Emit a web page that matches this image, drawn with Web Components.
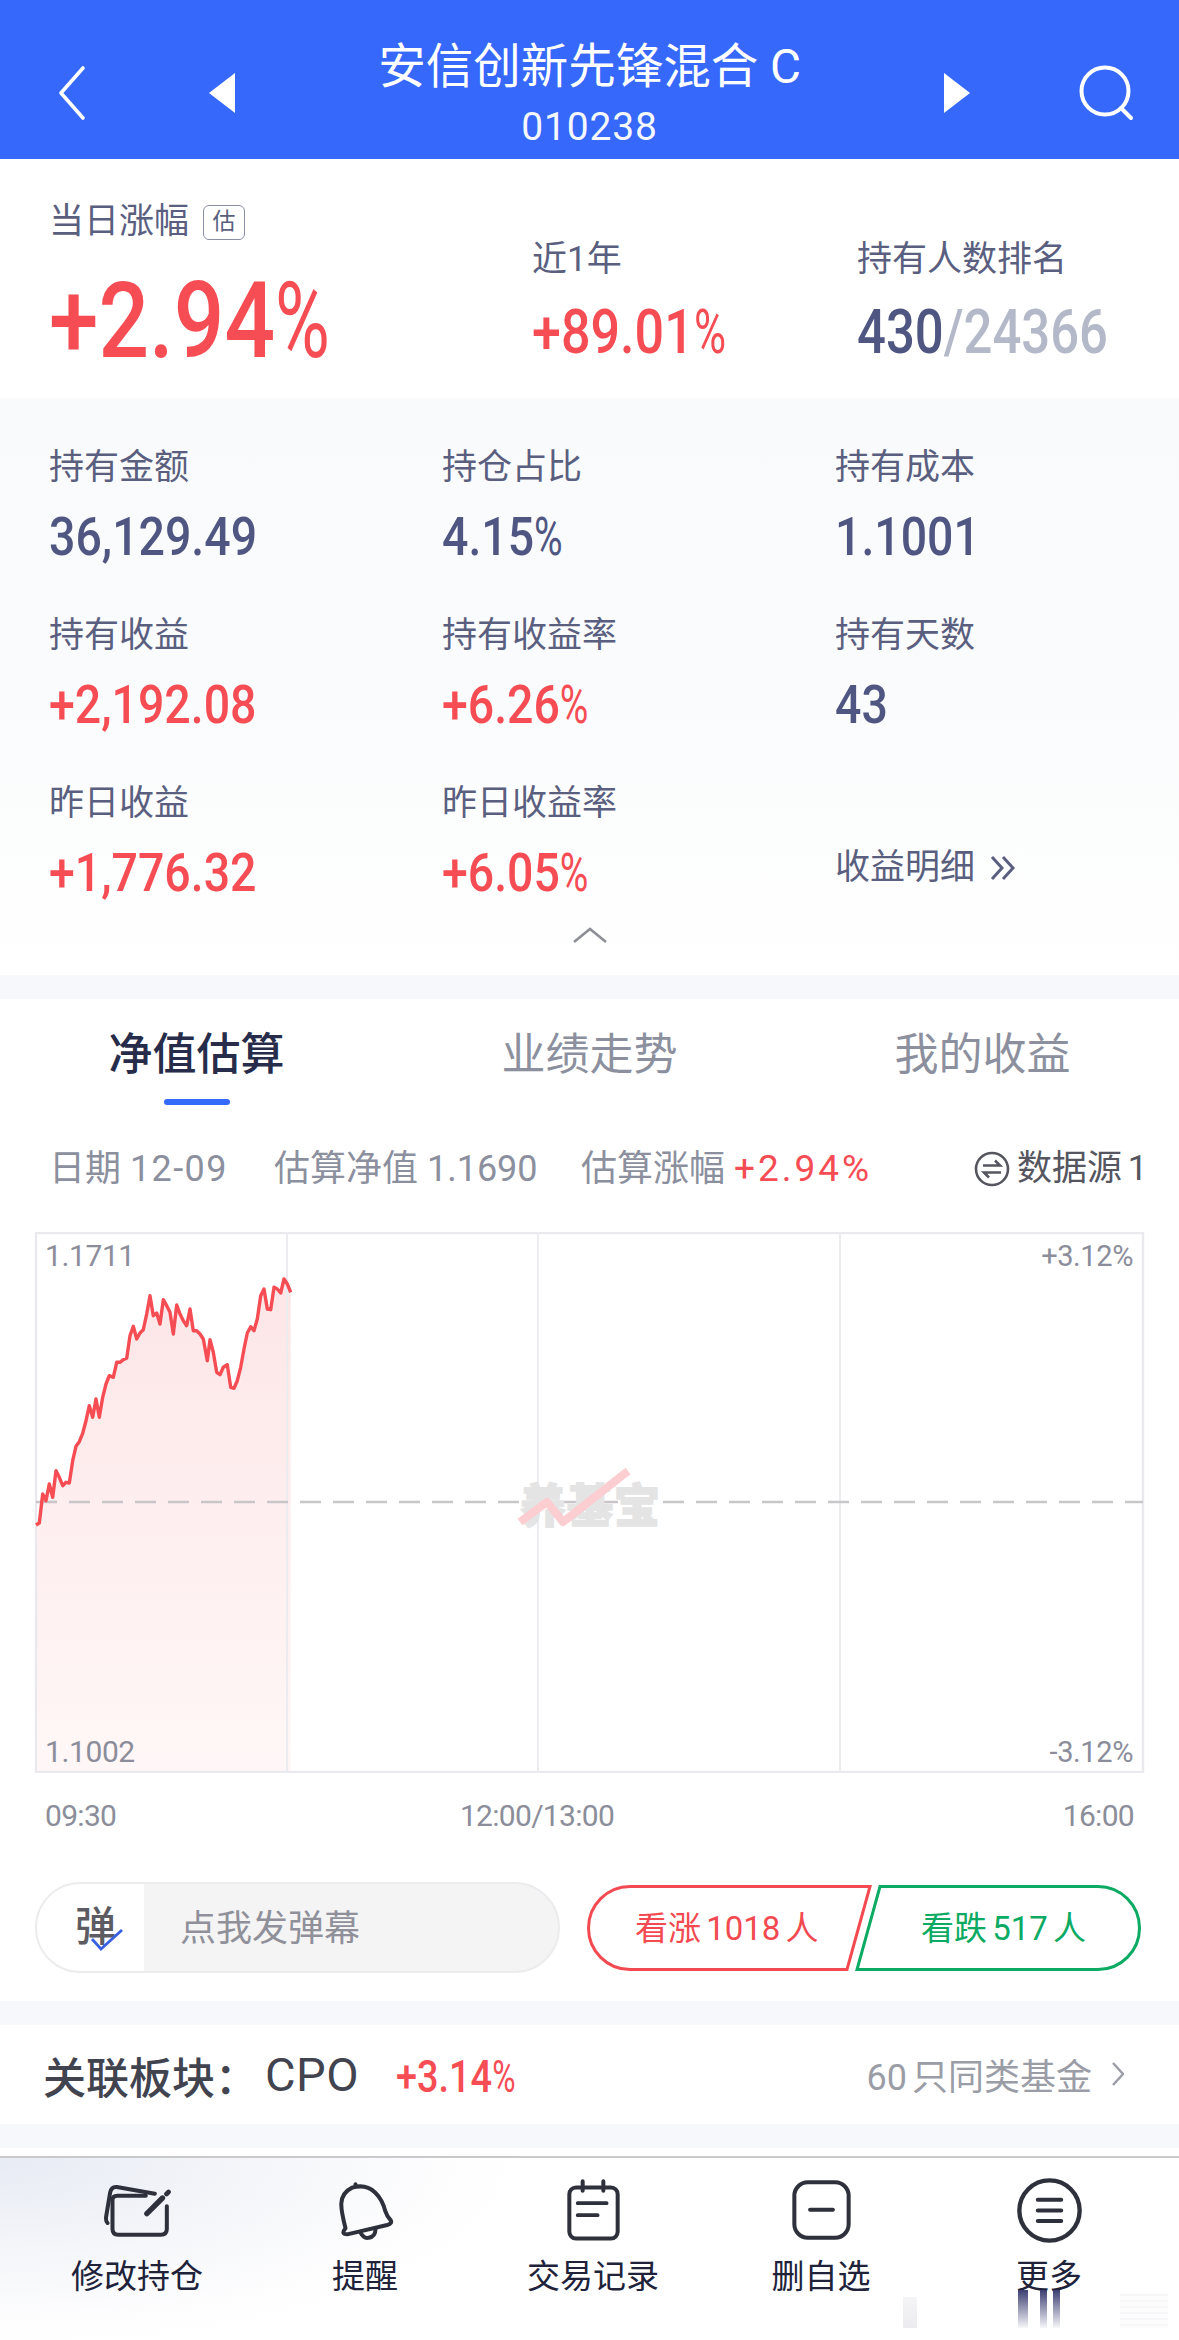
<!DOCTYPE html>
<html lang="zh">
<head>
<meta charset="utf-8">
<title>fund</title>
<style>
html,body{margin:0;padding:0;background:#fff}
body{width:1179px;height:2340px;overflow:hidden;font-family:Roboto,"Noto Sans CJK SC",sans-serif}
</style>
</head>
<body>
<fund-app></fund-app>
<script>
const CN = 'Roboto,"Noto Sans CJK SC",sans-serif'
const PCT = '<span style="font-weight:400;display:inline-block;transform:scaleX(.84);transform-origin:0 50%">%</span>'

class FundHeader extends HTMLElement{
  constructor(){
    super()
    this.attachShadow({mode:"open"}).innerHTML=`<style>
    :host{display:flex;height:159px;background:#3568fb;color:#fff;align-items:stretch;font-family:${CN}}
    .back{width:209px;padding:26px 0 0 57px;box-sizing:border-box;display:flex;align-items:center}
    .mid{flex:1;display:flex;align-items:center;justify-content:space-between;padding-top:26px}
    .t{text-align:center;padding-top:12px;align-self:flex-start}
    .n{font-size:47.5px;line-height:58px;font-weight:400;white-space:nowrap}
    .c{font-size:39px;line-height:44px;letter-spacing:.8px;margin-top:9px;opacity:.95}
    svg{display:block}
    .s{width:209px;padding:26px 0 0 109px;box-sizing:border-box;display:flex;align-items:center}
    </style>
    <div class="back"><svg width="30" height="56" viewBox="0 0 30 56"><path d="M26 3 L4 28 L26 53" fill="none" stroke="#fff" stroke-width="3.6" stroke-linecap="round" stroke-linejoin="round"/></svg></div>
    <div class="mid">
      <svg width="26" height="40" viewBox="0 0 26 40"><path d="M26 0V40L0 20Z" fill="#fff"/></svg>
      <div class="t"><div class="n"><slot name="name"></slot></div><div class="c"><slot name="code"></slot></div></div>
      <svg width="26" height="40" viewBox="0 0 26 40"><path d="M0 0V40L26 20Z" fill="#fff"/></svg>
    </div>
    <div class="s"><svg width="56" height="56" viewBox="0 0 56 56"><circle cx="26" cy="26" r="23.5" fill="none" stroke="#fff" stroke-width="4"/><path d="M42 43 L52 53" stroke="#fff" stroke-width="4" stroke-linecap="round"/></svg></div>`
  }
}
customElements.define("fund-header",FundHeader)

// number in the squeezed DIN look of the app
class FundNum extends HTMLElement{
  constructor(){
    super()
    this.attachShadow({mode:"open"}).innerHTML=`<style>
    :host{display:block;font-family:Roboto,sans-serif;font-weight:500;white-space:nowrap;
      font-size:var(--fs,54px);line-height:1;transform:scaleX(var(--sx,.86));transform-origin:0 50%;color:#4f5682}
    :host([up]){color:#f64c53}
    </style><slot></slot>`
  }
}
customElements.define("fund-num",FundNum)

class FundSummary extends HTMLElement{
  constructor(){
    super()
    this.attachShadow({mode:"open"}).innerHTML=`<style>
    :host{display:flex;height:239px;box-sizing:border-box;background:#fff;font-family:${CN};color:#5a5f80;font-size:35px;line-height:44px}
    .a{width:532px;padding:41px 0 0 49px;box-sizing:border-box}
    .b{width:325px;padding-top:79px;box-sizing:border-box}
    .c{flex:1;padding-top:79px}
    .row{display:flex;align-items:center;gap:14px}
    .tag{width:42px;height:35px;box-sizing:border-box;border:1.5px solid #8b8fa5;border-radius:6px;font-size:23px;line-height:31px;text-align:center}
    .big{--fs:106px;--sx:.84;margin-top:24px}
    .mid{--fs:62px;--sx:.84;margin-top:19px}
    .c .mid{--sx:.82}
    .gray{color:#b3b9c8}
    </style>
    <div class="a"><div class="row">当日涨幅<span class="tag">估</span></div><fund-num class="big" up>+2.94${PCT}</fund-num></div>
    <div class="b"><div>近1年</div><fund-num class="mid" up>+89.01${PCT}</fund-num></div>
    <div class="c"><div>持有人数排名</div><fund-num class="mid">430<span class="gray">/24366</span></fund-num></div>`
  }
}
customElements.define("fund-summary",FundSummary)

class FundStat extends HTMLElement{
  constructor(){
    super()
    this.attachShadow({mode:"open"}).innerHTML=`<style>
    :host{display:block;font-family:${CN};color:#5a5f80;font-size:35px;line-height:44px}
    fund-num{margin-top:20px}
    </style><div><slot name="k"></slot></div><fund-num ${this.hasAttribute("up")?"up":""}><slot></slot></fund-num>`
  }
}
customElements.define("fund-stat",FundStat)

class FundStats extends HTMLElement{
  constructor(){
    super()
    this.attachShadow({mode:"open"}).innerHTML=`<style>
    :host{display:block;height:577px;box-sizing:border-box;padding:48px 0 0 49px;background:linear-gradient(#f9fafb,#fafbfc 50%,#fff);font-family:${CN}}
    .g{display:grid;grid-template-columns:393px 393px 1fr;row-gap:50px}
    .more{align-self:end;display:flex;align-items:center;gap:14px;color:#5a5f80;font-size:35px;line-height:44px;padding-bottom:10px}
    .up{display:flex;justify-content:center;margin:26px 0 0 -49px}
    </style>
    <div class="g">
      <fund-stat><span slot="k">持有金额</span>36,129.49</fund-stat>
      <fund-stat><span slot="k">持仓占比</span>4.15${PCT}</fund-stat>
      <fund-stat><span slot="k">持有成本</span>1.1001</fund-stat>
      <fund-stat up><span slot="k">持有收益</span>+2,192.08</fund-stat>
      <fund-stat up><span slot="k">持有收益率</span>+6.26${PCT}</fund-stat>
      <fund-stat><span slot="k">持有天数</span>43</fund-stat>
      <fund-stat up><span slot="k">昨日收益</span>+1,776.32</fund-stat>
      <fund-stat up><span slot="k">昨日收益率</span>+6.05${PCT}</fund-stat>
      <div class="more">收益明细<svg width="27" height="28" viewBox="0 0 27 28"><path d="M3 3 L13 14 L3 25 M14 3 L24 14 L14 25" fill="none" stroke="#5a5f80" stroke-width="3"/></svg></div>
    </div>
    <div class="up"><svg width="36" height="18" viewBox="0 0 36 18"><path d="M2 16 L18 3 L34 16" fill="none" stroke="#8d8f96" stroke-width="2.6"/></svg></div>`
  }
}
customElements.define("fund-stats",FundStats)

class FundBand extends HTMLElement{
  constructor(){
    super()
    this.attachShadow({mode:"open"}).innerHTML=`<style>:host{display:block;height:24px;background:#f6f8fc}</style>`
  }
}
customElements.define("fund-band",FundBand)

class FundTabs extends HTMLElement{
  constructor(){
    super()
    this.attachShadow({mode:"open"}).innerHTML=`<style>
    :host{display:grid;grid-template-columns:repeat(3,1fr);height:110px;box-sizing:border-box;font-family:${CN};font-size:44px;color:#8c909e;text-align:center}
    div{padding-top:28px;line-height:56px}
    .on{color:#262c4a;font-weight:500}
    .on::after{content:"";display:block;width:66px;height:6px;border-radius:3px;background:#356afe;margin:16px auto 0}
    </style>
    <div class="on">净值估算</div><div>业绩走势</div><div>我的收益</div>`
  }
}
customElements.define("fund-tabs",FundTabs)

class FundInfo extends HTMLElement{
  constructor(){
    super()
    this.attachShadow({mode:"open"}).innerHTML=`<style>
    :host{display:flex;align-items:flex-start;height:123px;box-sizing:border-box;padding:37px 30px 0 49px;font-family:${CN};font-size:36px;line-height:46px;color:#8b8f9e;white-space:nowrap}
    .d{width:225px}
    .d em{font-style:normal;letter-spacing:1.4px}
    .e{width:307px}
    .f{width:393px}
    .f b{font-weight:400;color:#f64c53;font-size:37px;letter-spacing:3px}
    .s{display:flex;align-items:center;gap:7px;color:#55565f;font-size:35px;word-spacing:-3px}
    </style>
    <span class="d">日期 <em>12-09</em></span><span class="e">估算净值 1.1690</span><span class="f">估算涨幅 <b>+2.94%</b></span>
    <span class="s"><svg width="36" height="36" viewBox="0 0 36 36"><circle cx="18" cy="18" r="16" fill="none" stroke="#55565f" stroke-width="2.6"/><path d="M9 14.5H26L21 9.5M27 21.5H10L15 26.5" fill="none" stroke="#55565f" stroke-width="2.6"/></svg>数据源 1</span>`
  }
}
customElements.define("fund-info",FundInfo)

class FundChart extends HTMLElement{
  constructor(){
    super()
    // traced off the reference at 3x, crop started at y=1200
    const raw=[108,978,118,972,128,885,138,905,148,855,158,895,168,815,178,835,188,860,198,850,208,852,218,785,228,742,238,728,248,703,258,665,268,620,278,655,288,600,298,655,308,595,318,555,328,530,340,535,350,490,360,490,370,482,380,478,390,410,400,382,410,420,420,402,430,392,440,345,450,290,460,350,470,342,480,375,490,302,500,320,510,340,520,405,530,318,540,345,550,365,560,380,570,330,580,395,590,395,600,405,610,420,622,485,630,422,640,460,650,520,660,527,670,505,682,497,692,565,702,568,712,545,722,505,732,450,742,402,752,383,762,395,772,360,782,290,792,270,802,330,812,332,822,265,832,270,842,282,852,240,862,255,872,280]
    let pts=[]
    for(let i=0;i<raw.length;i+=2){
      pts.push((raw[i]/3).toFixed(1)+","+(raw[i+1]/3+1200).toFixed(1))
    }
    const line=pts.join(" ")
    this.attachShadow({mode:"open"}).innerHTML=`<style>
    :host{display:block;position:relative;height:541px;font-family:${CN};color:#8b8d9a;font-size:30px}
    svg{position:absolute;left:0;top:0}
    span{position:absolute;line-height:36px;letter-spacing:-.4px}
    .mark{left:520px;top:246px;font-size:46px;line-height:56px;font-weight:900;color:#e4e4e4;letter-spacing:1px;-webkit-text-stroke:1.5px #e4e4e4}
    </style>
    <svg width="1179" height="541" viewBox="0 1233 1179 541">
      <defs><linearGradient id="g" x1="0" y1="0" x2="0" y2="1"><stop offset="0" stop-color="#fde6e7"/><stop offset="1" stop-color="#fff7f7"/></linearGradient></defs>
      <polygon points="36,1773 ${line} 290.7,1773" fill="url(#g)"/>
      <rect x="36" y="1234" width="1107" height="539" fill="none" stroke="#e9e9ee" stroke-width="2.4"/>
      <path d="M287 1233V1773M538 1233V1773M840 1233V1773" stroke="#ececf0" stroke-width="2"/>
      <path d="M36 1503H1143" stroke="#c9c6ca" stroke-width="2.4" stroke-dasharray="21 12"/>
      <polyline points="${line}" fill="none" stroke="#f64c53" stroke-width="3.4" stroke-linejoin="round"/>
    </svg>
    <span class="mark">养基宝</span>
    <svg width="1179" height="541" viewBox="0 1233 1179 541"><path d="M520 1523 547 1503 563 1523 628 1472" fill="none" stroke="#fccdd1" stroke-width="8" stroke-linejoin="round"/></svg>
    <span style="left:45px;top:6px">1.1711</span>
    <span style="right:46px;top:6px;font-size:29px">+3.12%</span>
    <span style="left:45px;bottom:3px">1.1002</span>
    <span style="right:46px;bottom:3px;font-size:29px">-3.12%</span>`
  }
}
customElements.define("fund-chart",FundChart)

class FundAxis extends HTMLElement{
  constructor(){
    super()
    this.attachShadow({mode:"open"}).innerHTML=`<style>
    :host{display:flex;justify-content:space-between;height:109px;box-sizing:border-box;padding:24px 45px 0 45px;font-family:${CN};font-size:30px;line-height:38px;color:#8b8d9a;letter-spacing:-.7px}
    .m{margin-right:105px}
    </style><span>09:30</span><span class="m">12:00/13:00</span><span>16:00</span>`
  }
}
customElements.define("fund-axis",FundAxis)

class FundBarrage extends HTMLElement{
  constructor(){
    super()
    this.attachShadow({mode:"open"}).innerHTML=`<style>
    :host{display:flex;height:119px;box-sizing:border-box;padding-left:35px;font-family:${CN};font-size:33px}
    .in{width:525px;height:91px;box-sizing:border-box;border:2px solid #ececee;border-radius:46px;overflow:hidden;display:flex;background:#f4f4f5;color:#8f909a;font-size:36px;line-height:90px}
    .dan{width:107px;background:#fff;box-sizing:border-box;padding-left:38px;color:#5c5c62;font-weight:500;font-size:41px;line-height:86px;position:relative}
    .dan svg{position:absolute;left:54px;top:45px}
    .ph{padding-left:36px}
    .vote{position:relative;width:555px;height:87px;margin:3px 0 0 26px;display:flex;line-height:87px;white-space:nowrap;word-spacing:-3px}
    .vote>svg{position:absolute;left:0;top:0}
    .r{position:relative;width:335px;padding-left:49px;box-sizing:border-box;color:#f24a50}
    .l{position:relative;color:#0caa62}
    </style>
    <div class="in"><div class="dan">弹<svg width="32" height="22" viewBox="0 0 32 22"><path d="M1 10 L10 20 L31 1" fill="none" stroke="#3a62e0" stroke-width="2.8"/></svg></div><div class="ph">点我发弹幕</div></div>
    <div class="vote">
      <svg width="555" height="87" viewBox="586 1886 555 87"><path d="M870 1887.5H630a41.5 41.5 0 0 0 0 83H847Z" fill="none" stroke="#f24a50" stroke-width="3"/><path d="M880 1887.5H1098a41.5 41.5 0 0 1 0 83H857Z" fill="none" stroke="#0caa62" stroke-width="3"/></svg>
      <div class="r">看涨 1018 人</div><div class="l">看跌 517 人</div>
    </div>`
  }
}
customElements.define("fund-barrage",FundBarrage)

class FundRelated extends HTMLElement{
  constructor(){
    super()
    this.attachShadow({mode:"open"}).innerHTML=`<style>
    :host{display:flex;align-items:center;height:99px;padding:0 55px 0 43px;background:#fff;font-family:${CN};white-space:nowrap}
    .k{font-size:43px;font-weight:500;color:#41434f;width:353px;display:flex;align-items:center;gap:7px}
    .k b{font-size:47px;font-weight:400;letter-spacing:.5px}
    .v{--fs:44px;--sx:.86;flex:1;margin-top:4px}
    .r{font-size:36px;color:#9a9ca6;display:flex;align-items:center;gap:20px;word-spacing:-4px;margin-top:-2px}
    </style>
    <div class="k">关联板块：<b>CPO</b></div><fund-num class="v" up>+3.14${PCT}</fund-num>
    <div class="r">60 只同类基金<svg width="12" height="24" viewBox="0 0 12 24"><path d="M1 1 L11 12 L1 23" fill="none" stroke="#9a9ca6" stroke-width="2.4"/></svg></div>`
  }
}
customElements.define("fund-related",FundRelated)

class FundTool extends HTMLElement{
  constructor(){
    super()
    this.attachShadow({mode:"open"}).innerHTML=`<style>
    :host{display:flex;flex-direction:column;align-items:center;width:228px;font-family:${CN};font-size:33px;color:#20223a}
    .i{height:72px;display:flex;align-items:center;justify-content:center}
    .l{margin-top:9px;line-height:44px}
    </style><div class="i"><slot name="icon"></slot></div><div class="l"><slot></slot></div>`
  }
}
customElements.define("fund-tool",FundTool)

class FundToolbar extends HTMLElement{
  constructor(){
    super()
    const s='fill="none" stroke="#2e303c" stroke-width="12" stroke-linecap="round" stroke-linejoin="round"'
    this.attachShadow({mode:"open"}).innerHTML=`<style>
    :host{display:flex;position:relative;height:184px;box-sizing:border-box;border-top:2px solid #c9c9cc;padding:16px 0 0 23px;background:radial-gradient(ellipse 520px 190px at 0 0,#e7ebf4,#f6f7fa 55%,#fdfdfe 85%,#fff)}
    svg{display:block}
    i{position:absolute;display:block}
    .a{left:903px;top:139px;width:14px;height:31px;background:linear-gradient(#f4f4f6,#ececf0)}
    .b{top:132px;height:38px;background:linear-gradient(#3d3f72,rgba(200,202,222,.15))}
    .c{left:1120px;top:136px;width:48px;height:34px;background:repeating-linear-gradient(#f6f6f8 0 2px,#fcfcfd 2px 6px)}
    </style>
    <fund-tool><svg slot="icon" width="67" height="55" viewBox="40 50 200 165"><path d="M228 120V188Q228 205 210 205H82Q65 205 65 188V100Q65 88 80 88H165" ${s}/><path d="M50 170Q44 165 46 150L58 78Q62 60 78 62L192 82" ${s}/><path d="M168 142L215 95" fill="none" stroke="#2e303c" stroke-width="16" stroke-linecap="round"/><path d="M227 83L233 77" fill="none" stroke="#2e303c" stroke-width="14" stroke-linecap="round"/></svg>修改持仓</fund-tool>
    <fund-tool><svg slot="icon" width="57" height="60" viewBox="745 45 170 180"><path d="M770 190C755 130 745 90 790 68C850 50 880 100 890 140Q895 155 905 165Q912 175 895 180L775 208Q755 208 770 190Z" ${s}/><path d="M815 203Q825 222 840 218Q860 215 860 192" ${s}/><path d="M800 58V60" ${s}/></svg>提醒</fund-tool>
    <fund-tool><svg slot="icon" width="55" height="62" viewBox="50 40 165 185"><rect x="60" y="65" width="145" height="153" rx="20" ${s}/><path d="M100 46V75M162 46V75" ${s}/><path d="M85 112H172M85 148H145" fill="none" stroke="#2e303c" stroke-width="11" stroke-linecap="round"/></svg>交易记录</fund-tool>
    <fund-tool><svg slot="icon" width="61" height="62" viewBox="725 45 182 185"><rect x="735" y="55" width="162" height="165" rx="40" ${s}/><path d="M782 137H850" fill="none" stroke="#2e303c" stroke-width="12" stroke-linecap="round"/></svg>删自选</fund-tool>
    <fund-tool><svg slot="icon" width="67" height="67" viewBox="410 37 200 200"><circle cx="510" cy="137" r="90" fill="none" stroke="#2e303c" stroke-width="13"/><path d="M475 105H545M475 137H545M475 168H545" fill="none" stroke="#2e303c" stroke-width="12" stroke-linecap="round"/></svg>更多</fund-tool>
    <i class="a"></i><i class="b" style="left:1018px;width:10px"></i><i class="b" style="left:1040px;width:7px"></i><i class="b" style="left:1053px;width:7px"></i><i class="c"></i>`
  }
}
customElements.define("fund-toolbar",FundToolbar)

class FundApp extends HTMLElement{
  constructor(){
    super()
    this.attachShadow({mode:"open"}).innerHTML=`<style>
    :host{display:block;width:1179px;height:2340px;overflow:hidden;background:#fff}
    .gap{height:8px}
    </style>
    <fund-header><span slot="name">安信创新先锋混合 C</span><span slot="code">010238</span></fund-header>
    <fund-summary></fund-summary>
    <fund-stats></fund-stats>
    <fund-band></fund-band>
    <fund-tabs></fund-tabs>
    <fund-info></fund-info>
    <fund-chart></fund-chart>
    <fund-axis></fund-axis>
    <fund-barrage></fund-barrage>
    <fund-band></fund-band>
    <fund-related></fund-related>
    <fund-band></fund-band>
    <div class="gap"></div>
    <fund-toolbar></fund-toolbar>`
  }
}
customElements.define("fund-app",FundApp)
</script>
</body>
</html>
